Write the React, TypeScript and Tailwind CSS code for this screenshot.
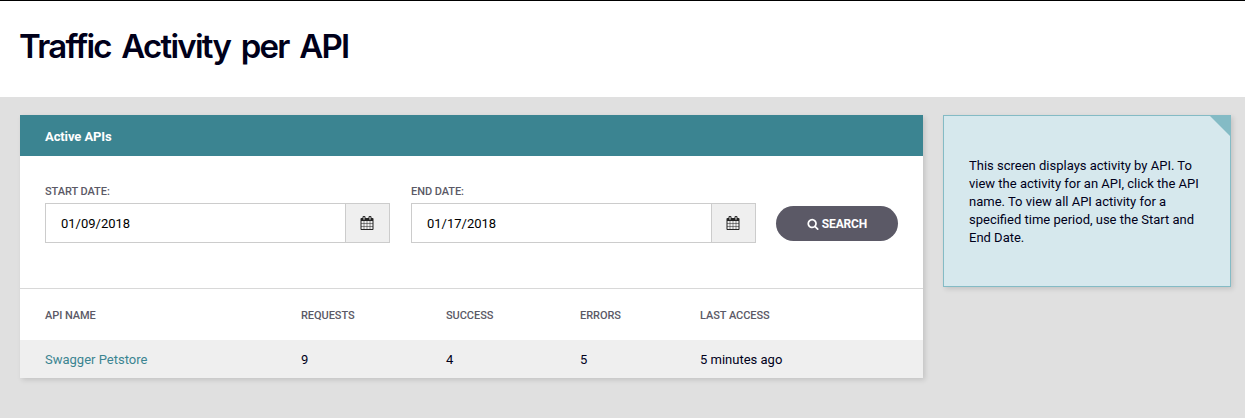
function CalendarIcon() {
  return (
    <svg viewBox="0 0 1792 1792" className="mr-px size-3.5 shrink-0 fill-[#222]" aria-hidden="true">
      <path d="M192 1664h288v-288h-288v288zM544 1664h320v-288h-320v288zM192 1312h288v-320h-288v320zM544 1312h320v-320h-320v320zM192 928h288v-288h-288v288zM928 1664h320v-288h-320v288zM544 928h320v-288h-320v288zM1312 1664h288v-288h-288v288zM928 1312h320v-320h-320v320zM576 448v-288q0-13-9.500-22.500t-22.500-9.500h-64q-13 0-22.500 9.500t-9.500 22.500v288q0 13 9.500 22.500t22.500 9.500h64q13 0 22.500-9.500t9.500-22.500zM1312 1312h288v-320h-288v320zM928 928h320v-288h-320v288zM1312 928h288v-288h-288v288zM1344 448v-288q0-13-9.500-22.500t-22.500-9.500h-64q-13 0-22.500 9.500t-9.500 22.500v288q0 13 9.500 22.500t22.500 9.500h64q13 0 22.500-9.500t9.500-22.500zM1728 384v1280q0 52-38 90t-90 38h-1408q-52 0-90-38t-38-90v-1280q0-52 38-90t90-38h128v-96q0-66 47-113t113-47h64q66 0 113 47t47 113v96h384v-96q0-66 47-113t113-47h64q66 0 113 47t47 113v96h128q52 0 90 38t38 90z" />
    </svg>
  );
}

function SearchIcon() {
  return (
    <svg viewBox="0 0 1792 1792" className="size-3 shrink-0 fill-white" aria-hidden="true">
      <path d="M1216 832q0-185-131.500-316.500t-316.500-131.500-316.500 131.500-131.500 316.500 131.500 316.500 316.500 131.500 316.500-131.500 131.500-316.500zm512 832q0 52-38 90t-90 38q-54 0-90-38l-343-342q-179 124-399 124-143 0-273.500-55.500t-225-150-150-225-55.500-273.500 55.500-273.500 150-225 225-150 273.500-55.500 273.500 55.500 225 150 150 225 55.500 273.500q0 220-124 399l343 343q37 37 37 90z" />
    </svg>
  );
}

function DateField({ label, value }: { label: string; value: string }) {
  return (
    <label className="flex w-[345px] flex-col">
      <span className="mb-[3px] h-4 text-[11px] leading-4 font-medium tracking-[-0.06px] text-[#5b5966]">{label}</span>
      <span className="flex h-10 border border-[#ccc]">
        <span className="flex flex-1 items-center pt-px pl-[15px] text-[13px] text-black">{value}</span>
        <span className="flex w-11 items-center justify-center border-l border-[#ccc] bg-[#efefef]">
          <CalendarIcon />
        </span>
      </span>
    </label>
  );
}

const columns = "grid grid-cols-[256px_145px_134px_120px_1fr] items-center pl-[25px]";

export default function App() {
  return (
    <div className="flex h-[418px] w-[1245px] flex-col overflow-hidden bg-[#e0e0e0] font-['Roboto',sans-serif] text-[13px] text-[#00001a]">
      <header className="h-[97px] shrink-0 border-t border-black bg-white pt-[25px] pl-[19px]">
        <h1 className="font-['Inter',sans-serif] text-[33px] leading-10 font-semibold tracking-[-1.75px] [word-spacing:4px] whitespace-nowrap">
          Traffic Activity per API
        </h1>
      </header>

      <main className="flex items-start gap-5 pt-[18px] pl-5">
        <section className="w-[903px] bg-white shadow-[2px_2px_5px_rgba(0,0,0,0.13)]">
          <h2 className="flex h-[41px] items-center bg-[#3b8491] pt-0.5 pl-[25px] text-[13px] font-bold tracking-[-0.1px] text-white">
            Active APIs
          </h2>
          <div className="flex h-[132px] pt-7 pl-[25px]">
            <DateField label="START DATE:" value="01/09/2018" />
            <div className="ml-[21px]">
              <DateField label="END DATE:" value="01/17/2018" />
            </div>
            <button className="mt-[22px] ml-5 flex h-[35px] w-[122px] items-center justify-center gap-[3px] rounded-full bg-[#5b5966] text-xs font-bold tracking-[-0.15px] text-white">
              <SearchIcon />
              SEARCH
            </button>
          </div>
          <div className={`${columns} h-[52px] border-t border-[#d8d8d8] pt-[3px] text-[11px] font-medium tracking-[-0.06px] text-[#5b5966]`}>
            <span>API NAME</span>
            <span>REQUESTS</span>
            <span>SUCCESS</span>
            <span>ERRORS</span>
            <span>LAST ACCESS</span>
          </div>
          <div className={`${columns} h-[38px] bg-[#efefef] pt-px`}>
            <a className="text-[#3b8491]">Swagger Petstore</a>
            <span>9</span>
            <span>4</span>
            <span>5</span>
            <span>5 minutes ago</span>
          </div>
        </section>

        <aside className="relative h-[172px] w-[288px] border border-[#84bbc5] bg-[#d6e8ed] pt-[41px] pl-[25px] text-[13px] leading-[18px] shadow-[2px_2px_5px_rgba(0,0,0,0.13)]">
          <span className="absolute top-0 right-0 size-5 bg-[#84bbc5] [clip-path:polygon(0_0,100%_0,100%_100%)]" />
          <p className="w-[236px]">
            This screen displays activity by API. To view the activity for an API, click the API name. To view all API activity for a specified time period, use the Start and End Date.
          </p>
        </aside>
      </main>
    </div>
  );
}
